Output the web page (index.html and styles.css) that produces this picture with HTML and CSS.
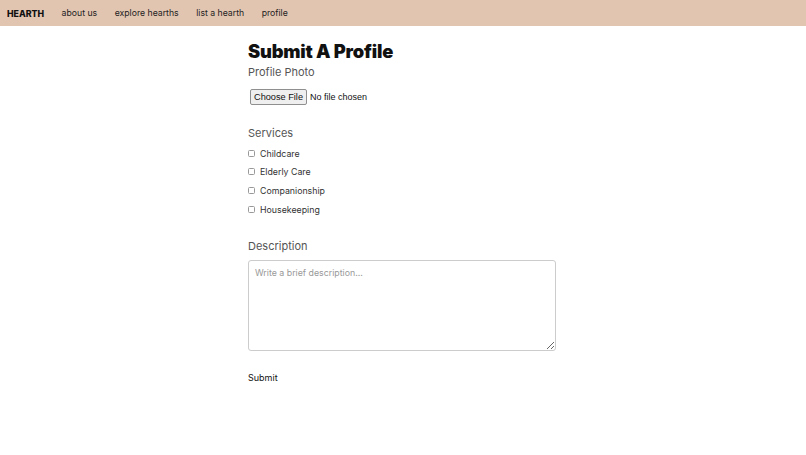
FILE: index.html
```html
<!DOCTYPE html>
<html>
<head>
<meta charset="utf-8">
<link rel="stylesheet" href="styles.css">
</head>
<body>
<nav class="nav">
  <span class="brand">HEARTH</span>
  <a class="link">about us</a>
  <a class="link">explore hearths</a>
  <a class="link">list a hearth</a>
  <a class="link">profile</a>
</nav>
<main class="main">
  <h1 class="title">Submit A Profile</h1>
  <div class="label photo-label">Profile Photo</div>
  <div class="file-row"><input class="file" type="file"></div>
  <div class="label services-label">Services</div>
  <div class="checks">
    <label class="check"><input type="checkbox"><span>Childcare</span></label>
    <label class="check"><input type="checkbox"><span>Elderly Care</span></label>
    <label class="check"><input type="checkbox"><span>Companionship</span></label>
    <label class="check"><input type="checkbox"><span>Housekeeping</span></label>
  </div>
  <div class="label desc-label">Description</div>
  <textarea class="desc" placeholder="Write a brief description..."></textarea>
  <div class="submit">Submit</div>
</main>
</body>
</html>
```
FILE: styles.css
```css
* { box-sizing: border-box; }
body {
  margin: 0;
  font-family: Inter, "Noto Sans", sans-serif;
  color: #111;
  background: #fff;
}
.nav {
  height: 26px;
  background: #e2c5b0;
  display: flex;
  align-items: center;
  padding-left: 7px;
  gap: 17.5px;
  font-size: 8.7px;
}
.brand {
  font-weight: 800;
  font-size: 8.8px;
  color: #111;
}
.link { color: #222; }
.main {
  width: 308px;
  margin-left: calc(50% - 155px);
  padding-top: 14px;
}
.title {
  margin: 0;
  font-size: 18.3px;
  font-weight: 900;
  letter-spacing: -0.2px;
  line-height: 22px;
}
.label {
  font-size: 11px;
  color: #555;
  line-height: 16px;
}
.photo-label { margin-top: 2px; }
.file-row {
  margin-top: 9px;
  padding-left: 2px;
  height: 16px;
  display: flex;
  align-items: center;
}
.file {
  font-size: 9px;
  font-family: "Liberation Sans", Arial, sans-serif;
  color: #111;
}
.file::file-selector-button {
  font-family: "Liberation Sans", Arial, sans-serif;
  font-size: 9.2px;
  height: 16px;
  padding: 0 3px;
  margin-right: 3px;
  border: 1px solid #8f8f8f;
  border-radius: 2px;
  background: #efefef;
  color: #111;
}
.services-label { margin-top: 20px; }
.checks {
  margin-top: 6px;
  display: flex;
  flex-direction: column;
  gap: 6.7px;
}
.check {
  display: flex;
  align-items: center;
  gap: 5px;
  font-size: 8.8px;
  color: #333;
  height: 12px;
}
.check input {
  appearance: none;
  margin: 0;
  width: 7px;
  height: 7px;
  border: 1px solid #999;
  border-radius: 1.5px;
  background: #fff;
}
.desc-label { margin-top: 23px; }
.desc {
  display: block;
  margin-top: 6px;
  width: 308px;
  height: 91px;
  border: 1px solid #ccc;
  border-radius: 3px;
  padding: 6px;
  font-family: Inter, sans-serif;
  font-size: 8.8px;
  resize: vertical;
}
.desc::placeholder { color: #999; }
.submit {
  margin-top: 21px;
  font-size: 9px;
  color: #111;
}
```
